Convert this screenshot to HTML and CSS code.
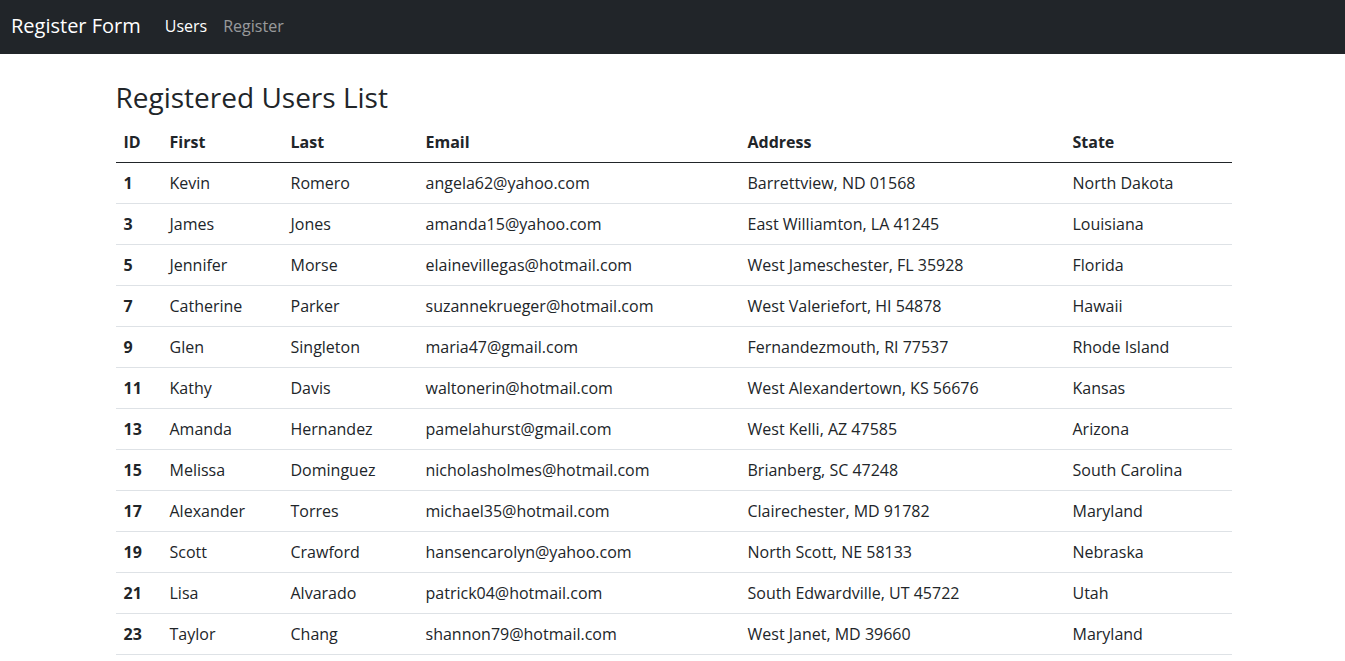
FILE: index.html
```html
<!DOCTYPE html>
<html lang="en">
<head>
<meta charset="utf-8">
<title>Register Form</title>
<link rel="stylesheet" href="styles.css">
</head>
<body>
<nav class="navbar">
  <a class="brand" href="#">Register Form</a>
  <ul class="nav">
    <li><a class="nav-link active" href="#">Users</a></li>
    <li><a class="nav-link" href="#">Register</a></li>
  </ul>
</nav>
<main class="container">
  <h3 class="title">Registered Users List</h3>
  <table class="table">
    <colgroup>
      <col class="c-id"><col class="c-first"><col class="c-last"><col class="c-email"><col class="c-addr"><col class="c-state">
    </colgroup>
    <thead>
      <tr><th>ID</th><th>First</th><th>Last</th><th>Email</th><th>Address</th><th>State</th></tr>
    </thead>
    <tbody>
      <tr><th>1</th><td>Kevin</td><td>Romero</td><td>angela62@yahoo.com</td><td>Barrettview, ND 01568</td><td>North Dakota</td></tr>
      <tr><th>3</th><td>James</td><td>Jones</td><td>amanda15@yahoo.com</td><td>East Williamton, LA 41245</td><td>Louisiana</td></tr>
      <tr><th>5</th><td>Jennifer</td><td>Morse</td><td>elainevillegas@hotmail.com</td><td>West Jameschester, FL 35928</td><td>Florida</td></tr>
      <tr><th>7</th><td>Catherine</td><td>Parker</td><td>suzannekrueger@hotmail.com</td><td>West Valeriefort, HI 54878</td><td>Hawaii</td></tr>
      <tr><th>9</th><td>Glen</td><td>Singleton</td><td>maria47@gmail.com</td><td>Fernandezmouth, RI 77537</td><td>Rhode Island</td></tr>
      <tr><th>11</th><td>Kathy</td><td>Davis</td><td>waltonerin@hotmail.com</td><td>West Alexandertown, KS 56676</td><td>Kansas</td></tr>
      <tr><th>13</th><td>Amanda</td><td>Hernandez</td><td>pamelahurst@gmail.com</td><td>West Kelli, AZ 47585</td><td>Arizona</td></tr>
      <tr><th>15</th><td>Melissa</td><td>Dominguez</td><td>nicholasholmes@hotmail.com</td><td>Brianberg, SC 47248</td><td>South Carolina</td></tr>
      <tr><th>17</th><td>Alexander</td><td>Torres</td><td>michael35@hotmail.com</td><td>Clairechester, MD 91782</td><td>Maryland</td></tr>
      <tr><th>19</th><td>Scott</td><td>Crawford</td><td>hansencarolyn@yahoo.com</td><td>North Scott, NE 58133</td><td>Nebraska</td></tr>
      <tr><th>21</th><td>Lisa</td><td>Alvarado</td><td>patrick04@hotmail.com</td><td>South Edwardville, UT 45722</td><td>Utah</td></tr>
      <tr><th>23</th><td>Taylor</td><td>Chang</td><td>shannon79@hotmail.com</td><td>West Janet, MD 39660</td><td>Maryland</td></tr>
    </tbody>
  </table>
</main>
</body>
</html>
```
FILE: styles.css
```css
* { box-sizing: border-box; }
html, body { margin: 0; padding: 0; }
body {
  font-family: "Open Sans", "Liberation Sans", sans-serif;
  font-size: 16px;
  line-height: 1.5;
  color: #212529;
  background: #fff;
}
a { text-decoration: none; }

.navbar {
  display: flex;
  align-items: center;
  background: #212529;
  height: 54px;
  padding: 0 12px 2px 11px;
}
.brand {
  color: #fff;
  font-size: 20px;
  line-height: 30px;
  margin-right: 16px;
}
.nav {
  display: flex;
  list-style: none;
  margin: 0;
  padding: 0;
}
.nav-link {
  display: block;
  padding: 8px 8px;
  color: rgba(255, 255, 255, 0.55);
}
.nav-link.active { color: #fff; }

.container {
  width: 1116px;
  margin: 0 auto;
  padding-top: 27px;
  position: relative;
  left: 1px;
}
.title {
  font-size: 28px;
  font-weight: 400;
  line-height: 1.2;
  margin: 0 0 7px 0;
}
.table {
  width: 100%;
  border-collapse: collapse;
  table-layout: fixed;
}
.c-id { width: 46px; }
.c-first { width: 121px; }
.c-last { width: 135px; }
.c-email { width: 322px; }
.c-addr { width: 325px; }
.c-state { width: 167px; }
.table th, .table td {
  padding: 8px;
  text-align: left;
  border-bottom: 1px solid #dee2e6;
  white-space: nowrap;
  vertical-align: top;
}
.table th { font-weight: 700; }
.table thead th {
  border-bottom: 1px solid #212529;
}
```
